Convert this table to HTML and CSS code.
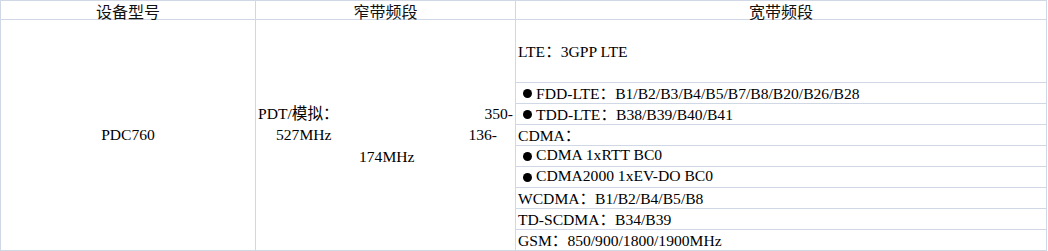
FILE: index.html
```html
<!DOCTYPE html>
<html lang="zh-CN">
<head>
<meta charset="utf-8">
<title>设备频段</title>
<link rel="stylesheet" href="styles.css">
</head>
<body>
<div class="sheet">
  <div class="head">设备型号</div>
  <div class="head">窄带频段</div>
  <div class="head">宽带频段</div>

  <div class="model">PDC760</div>
  <div class="narrow">
    <div class="nl nl-1"><span>PDT/模拟：</span><span>350-</span></div>
    <div class="nl nl-2"><span>527MHz</span><span>136-</span></div>
    <div class="nl nl-3"><span>174MHz</span></div>
  </div>

  <div class="band">LTE：3GPP LTE</div>
  <div class="band bullet">FDD-LTE：B1/B2/B3/B4/B5/B7/B8/B20/B26/B28</div>
  <div class="band bullet">TDD-LTE：B38/B39/B40/B41</div>
  <div class="band">CDMA：</div>
  <div class="band bullet">CDMA 1xRTT BC0</div>
  <div class="band bullet">CDMA2000 1xEV-DO BC0</div>
  <div class="band">WCDMA：B1/B2/B4/B5/B8</div>
  <div class="band">TD-SCDMA：B34/B39</div>
  <div class="band">GSM：850/900/1800/1900MHz</div>
</div>
</body>
</html>
```

FILE: styles.css
```css
html, body {
  margin: 0;
  padding: 0;
  background: #ffffff;
}

/* grid lines come from the container background showing through 1px gaps */
.sheet {
  display: grid;
  grid-template-columns: 254px 259px 530px;
  grid-template-rows: 18px 62px repeat(8, 20px);
  gap: 1px;
  padding: 1px;
  width: max-content;
  background: #d0d7e5;
  font-family: "Liberation Serif", "Noto Sans CJK SC", serif;
  font-size: 15.6px;
  color: #000000;
}

.sheet > div {
  background: #ffffff;
}

.head {
  font-family: "Noto Sans CJK SC", sans-serif;
  font-weight: 400;
  font-size: 16px;
  line-height: 17px;
  text-align: center;
  padding-top: 2px;
  color: #111111;
}

.model {
  grid-column: 1;
  grid-row: 2 / span 9;
  display: flex;
  align-items: center;
  justify-content: center;
}

.narrow {
  grid-column: 2;
  grid-row: 2 / span 9;
  display: flex;
  flex-direction: column;
  justify-content: center;
  line-height: 21.5px;
}

.nl {
  display: flex;
  justify-content: space-between;
}

.nl-1 {
  padding: 0 2px 0 2px;
}

.nl-2 {
  padding: 0 18px 0 20px;
}

.nl-3 {
  padding-left: 103px;
}

.band {
  grid-column: 3;
  display: flex;
  align-items: center;
  padding-left: 2px;
  padding-bottom: 3px;
  white-space: nowrap;
}

.bullet {
  padding-left: 7px;
}

.bullet::before {
  content: "";
  width: 9px;
  height: 9px;
  border-radius: 50%;
  background: #000000;
  margin-top: 4px;
  margin-right: 4px;
  flex: none;
}
```
